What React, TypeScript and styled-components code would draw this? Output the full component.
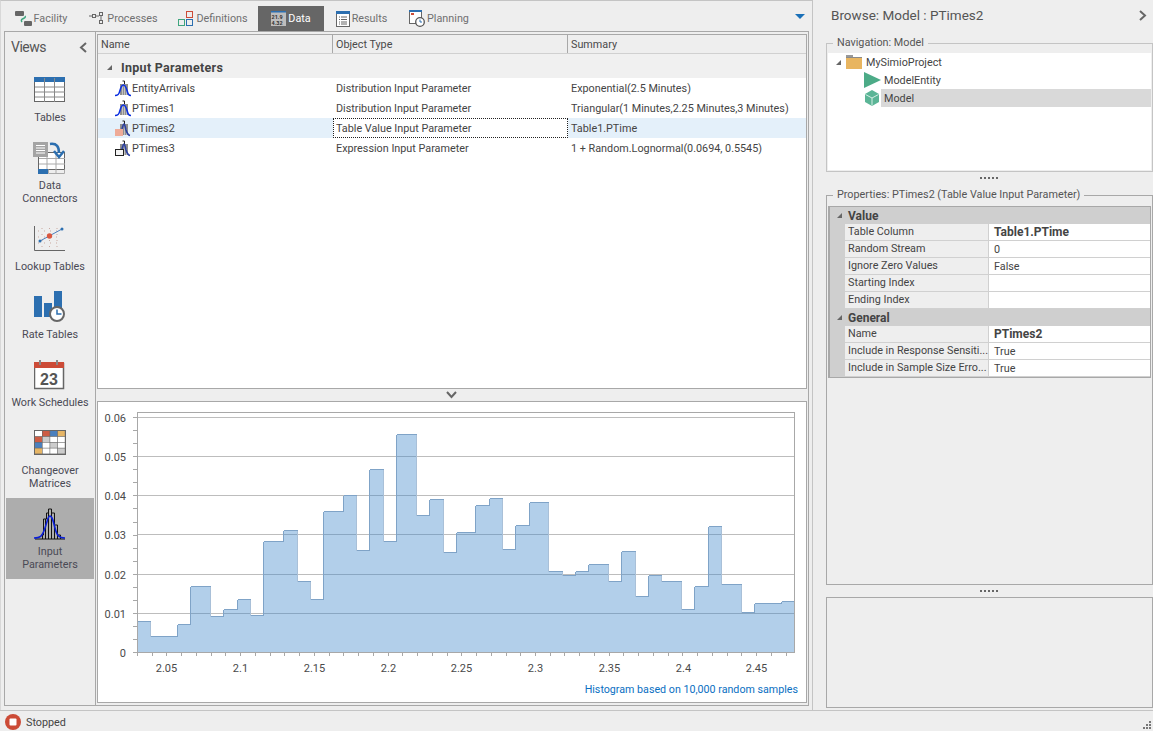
import * as React from "react";
import styled, { createGlobalStyle } from "styled-components";

const GlobalStyle = createGlobalStyle`
  html, body {
    margin: 0;
    padding: 0;
    background: #eeeeee;
  }
  body {
    font-family: Roboto, "Noto Sans", sans-serif;
    font-size: 10.8px;
    color: #444;
    overflow: hidden;
  }
  * {
    box-sizing: border-box;
  }
`;

const Shell = styled.div`
  display: flex;
  flex-direction: column;
  width: 1153px;
  height: 731px;
  background: #eeeeee;
`;

const Workspace = styled.div`
  display: flex;
  height: 711px;
  border-bottom: 1px solid #c4c4c4;
`;

const MainArea = styled.div`
  display: flex;
  flex-direction: column;
  width: 813px;
  border-top: 1px solid #c4c4c4;
  border-right: 1px solid #c4c4c4;
  border-left: 1px solid #d8d8d8;
`;

const TabBar = styled.div`
  display: flex;
  align-items: flex-end;
  height: 30px;
  padding-left: 2px;
  padding-right: 7px;
`;

const Tab = styled.div<{ $active?: boolean; $width: number }>`
  display: flex;
  align-items: center;
  justify-content: center;
  gap: 2px;
  width: ${p => p.$width}px;
  height: 25px;
  color: ${p => (p.$active ? "#ffffff" : "#707070")};
  background: ${p => (p.$active ? "#666666" : "transparent")};
`;

const TabMenu = styled.div`
  margin-left: auto;
  align-self: center;
  margin-top: 1px;
  width: 0;
  height: 0;
  border-left: 5px solid transparent;
  border-right: 5px solid transparent;
  border-top: 5px solid #1a70b8;
`;

const Frame = styled.div`
  display: flex;
  flex: 1;
  margin: 0 3px 4px 3px;
  border: 1px solid #a8a8a8;
  min-height: 0;
`;

const ViewsPanel = styled.div`
  display: flex;
  flex-direction: column;
  width: 91px;
  border-right: 1px solid #a8a8a8;
`;

const ViewsHeader = styled.div`
  display: flex;
  align-items: center;
  justify-content: space-between;
  height: 32px;
  padding: 0 5px 2px 6px;
  font-size: 14px;
  letter-spacing: -0.5px;
  color: #555;
`;

const ViewList = styled.div`
  display: flex;
  flex-direction: column;
  padding: 0 1px;
`;

const ViewItem = styled.div<{ $active?: boolean }>`
  display: flex;
  flex-direction: column;
  align-items: center;
  padding: 9px 0 8px;
  gap: 5px;
  text-align: center;
  line-height: 13px;
  color: #4a4a55;
  background: ${p => (p.$active ? "#adadad" : "transparent")};
`;

const ViewIconBox = styled.div`
  display: flex;
  align-items: center;
  justify-content: center;
  width: 34px;
  height: 33px;
`;

const ContentColumn = styled.div`
  display: flex;
  flex-direction: column;
  flex: 1;
  min-width: 0;
  padding: 2px 1px 2px 1px;
`;

const DataGrid = styled.div`
  display: flex;
  flex-direction: column;
  height: 356px;
  background: #ffffff;
  border: 1px solid #a8a8a8;
`;

const GridRow = styled.div`
  display: grid;
  grid-template-columns: 235px 235px 1fr;
`;

const HeaderRow = styled(GridRow)`
  height: 19px;
  background: #eeeeee;
  border-bottom: 1px solid #d0d0d0;
`;

const HeaderCell = styled.div`
  display: flex;
  align-items: center;
  padding-left: 3px;
  border-right: 1px solid #a8a8a8;
  color: #4a4a4a;
  &:last-child {
    border-right: 0;
  }
`;

const GroupRow = styled.div`
  display: flex;
  align-items: center;
  gap: 9px;
  height: 24px;
  padding: 2px 0 0 9px;
  background: #f0f0f0;
  font-size: 12.5px;
  letter-spacing: 0.3px;
  font-weight: 700;
  color: #444;
`;

const Triangle = styled.span`
  display: inline-block;
  width: 0;
  height: 0;
  border-left: 5px solid transparent;
  border-bottom: 5px solid #666;
`;

const DataRow = styled(GridRow)<{ $selected?: boolean }>`
  height: 20px;
  background: ${p => (p.$selected ? "#e4f0fa" : "#ffffff")};
`;

const NameCell = styled.div`
  display: flex;
  align-items: center;
  padding-left: 17px;
  gap: 1px;
  white-space: nowrap;
`;

const ValueCell = styled.div<{ $focused?: boolean }>`
  display: flex;
  align-items: center;
  padding-left: ${p => (p.$focused ? "2px" : "3px")};
  white-space: nowrap;
  background: ${p => (p.$focused ? "#ffffff" : "transparent")};
  border: ${p => (p.$focused ? "1px dotted #222" : "0")};
`;

const HSplitter = styled.div`
  display: flex;
  align-items: center;
  justify-content: center;
  height: 12px;
  padding-right: 2px;
`;

const ChartPanel = styled.div`
  height: 302px;
  background: #ffffff;
  border: 1px solid #a8a8a8;
`;

const RightPanel = styled.div`
  display: flex;
  flex-direction: column;
  flex: 1;
  min-width: 0;
  padding-left: 13px;
`;

const TitleBar = styled.div`
  display: flex;
  align-items: center;
  justify-content: space-between;
  height: 30px;
  padding: 0 4px 0 5px;
  font-size: 13.5px;
  color: #555;
`;

const GroupBox = styled.div<{ $height: number }>`
  position: relative;
  height: ${p => p.$height}px;
  margin-top: 13px;
  border: 1px solid #c4c4c4;
  padding: 9px 1px 1px;
`;

const GroupLegend = styled.div`
  position: absolute;
  top: -8px;
  left: 6px;
  padding: 0 4px;
  background: #eeeeee;
  color: #555;
  line-height: 14px;
`;

const NavTree = styled.div`
  height: 100%;
  background: #ffffff;
`;

const TreeRow = styled.div<{ $indent: number }>`
  display: flex;
  align-items: center;
  height: 18px;
  padding-left: ${p => p.$indent}px;
`;

const TreeLabel = styled.div<{ $selected?: boolean }>`
  display: flex;
  align-items: center;
  flex: 1;
  height: 18px;
  padding-left: 3px;
  background: ${p => (p.$selected ? "#d9d9d9" : "transparent")};
`;

const TreeFolderLabel = styled(TreeLabel)`
  padding-left: 4px;
`;

const TreeToggle = styled(Triangle)`
  margin-right: 5px;
`;

const DotRow = styled.div<{ $height: number; $after?: number }>`
  display: flex;
  align-items: center;
  justify-content: center;
  height: ${p => p.$height}px;
  margin-bottom: ${p => p.$after ?? 0}px;
`;

const PropertiesBox = styled(GroupBox)`
  margin-top: 0;
  padding: 0 1px;
  border-color: #a8a8a8;
`;

const PropGrid = styled.div`
  margin-top: 10px;
  border: 1px solid #a8a8a8;
  border-left-width: 2px;
  background: #cfcfcf;
  line-height: 16px;
`;

const PropCategory = styled.div`
  display: flex;
  align-items: center;
  gap: 6px;
  height: 17px;
  padding-left: 7px;
  font-size: 12px;
  font-weight: 700;
  color: #444;
`;

const PropRow = styled.div`
  display: grid;
  grid-template-columns: 144px 1fr;
  height: 17px;
  margin-left: 15px;
  background: #ffffff;
`;

const PropName = styled.div`
  padding: 0 0 0 3px;
  background: #eeeeee;
  border-right: 1px solid #d0d0d0;
  border-bottom: 1px solid #d0d0d0;
  white-space: nowrap;
  overflow: hidden;
  height: 17px;
  line-height: 15px;
`;

const PropValue = styled.div<{ $bold?: boolean }>`
  padding: 1px 0 0 5px;
  border-bottom: 1px solid #d0d0d0;
  font-size: ${p => (p.$bold ? "12px" : "inherit")};
  font-weight: ${p => (p.$bold ? 700 : 400)};
  height: 17px;
  line-height: 15px;
`;

const BottomBox = styled.div`
  height: 111px;
  border: 1px solid #a8a8a8;
`;

const StatusBar = styled.div`
  display: flex;
  align-items: center;
  gap: 5px;
  height: 20px;
  padding: 2px 2px 0 5px;
  color: #444;
`;

const StatusGrip = styled.div`
  display: flex;
  margin-left: auto;
  align-self: flex-end;
  margin-bottom: 2px;
`;

const DotsH = () => (
  <svg width="20" height="3">
    {[0, 4, 8, 12, 16].map(x => (
      <rect key={x} x={x} y="0" width="2" height="2" fill="#666" />
    ))}
  </svg>
);

const Chevron = ({ dir }: { dir: "left" | "right" | "down" }) => {
  const d = { left: "M7 1 2 5.5 7 10", right: "M2 1 7 5.5 2 10", down: "M1 2 5.5 7 10 2" }[dir];
  return (
    <svg width="11" height="11" fill="none" stroke="#666" strokeWidth="2">
      <path d={d} />
    </svg>
  );
};

/* tab icons */
const FacilityIcon = () => (
  <svg width="17" height="17">
    <rect x="0" y="1" width="9" height="5" rx="1" fill="#666" />
    <rect x="9" y="11" width="8" height="5" rx="1" fill="#666" />
    <path d="M10 6C12 9 4 8 7 12" fill="none" stroke="#3ea57e" strokeWidth="1.5" />
  </svg>
);

const ProcessesIcon = () => (
  <svg width="16" height="15" fill="none" stroke="#666">
    <rect x="3.5" y="3.5" width="3" height="3" />
    <rect x="10.5" y="1.5" width="3" height="3" />
    <rect x="10.5" y="9.5" width="3" height="3" />
    <path d="M0 5h3M7 5h3M12 5v4" />
  </svg>
);

const DefinitionsIcon = () => (
  <svg width="16" height="16" fill="none">
    <rect x="8.5" y="0.5" width="6" height="6" stroke="#cc4b37" />
    <rect x="0.5" y="8.5" width="6" height="6" stroke="#3ea57e" />
    <rect x="8.5" y="8.5" width="6" height="6" stroke="#2c6fb0" />
  </svg>
);

const DataIcon = () => (
  <svg width="15" height="15">
    <rect width="15" height="15" fill="#bdbdbd" />
    <rect width="15" height="1.500" fill="#2c6fb0" />
    <text x="0.5" y="7.5" fontSize="5.5" fontWeight="700" fill="#333">21.9</text>
    <text x="0.5" y="13.5" fontSize="5.5" fontWeight="700" fill="#333">4.32</text>
  </svg>
);

const ResultsIcon = () => (
  <svg width="14" height="16" fill="none">
    <rect x="0.5" y="0.5" width="13" height="15" fill="#fff" stroke="#666" />
    <rect x="0" y="0" width="14" height="3" fill="#2c6fb0" />
    <path d="M3 6h1M5 6h6M3 8.500h1M5 8.500h6M3 11h1M5 11h6M3 13h1M5 13h6" stroke="#666" />
  </svg>
);

const PlanningIcon = () => (
  <svg width="16" height="17" fill="none">
    <rect x="0.5" y="0.5" width="12" height="13" fill="#fff" stroke="#666" />
    <rect x="0" y="0" width="13" height="2" fill="#2c6fb0" />
    <rect x="2" y="3" width="3" height="2" fill="#cc4b37" />
    <circle cx="11" cy="12" r="4.300" fill="#fff" stroke="#555" strokeWidth="1.300" />
    <path d="M11 9.500V12h2" stroke="#2c6fb0" />
  </svg>
);

/* views icons */
const TablesIcon = () => (
  <svg width="32" height="26" fill="none">
    <rect x="0.5" y="0.5" width="30" height="24" fill="#fff" stroke="#666" />
    <rect x="0" y="0" width="31" height="5" fill="#2c6fb0" />
    <path d="M1 10h30M1 15h30M1 20h30" stroke="#888" />
    <path d="M10.500 1v24M20.500 1v24" stroke="#888" />
  </svg>
);

const ConnectorsIcon = () => (
  <svg width="34" height="32" fill="none">
    <rect x="5.500" y="10.500" width="26" height="17" fill="#fff" stroke="#666" />
    <path d="M6 16.500h26M6 22h26M14 11v17M23 11v17" stroke="#aaa" />
    <rect x="5" y="27" width="10" height="5" fill="#2c6fb0" />
    <path d="M15.500 27.500v4h16v-4M23 28v3" stroke="#aaa" />
    <rect x="0" y="0" width="15" height="15" fill="#a4a4a4" />
    <path d="M3 3.500h9M3 6h9M3 8.500h9M3 11h9" stroke="#fff" />
    <path d="M17 2c7-1 9 3 9 9" stroke="#2c6fb0" strokeWidth="2.500" />
    <path d="M21 9l5 6 5-6" stroke="#2c6fb0" strokeWidth="2.500" />
  </svg>
);

const LookupIcon = () => (
  <svg width="32" height="27" fill="none">
    <path d="M0.500 1v24.500H31" stroke="#666" />
    <path d="M4 6h24M4 12h24M4 18h24" stroke="#c9a9a0" strokeDasharray="1 5" />
    <path d="M15.500 3v22M8 3v22M23 3v22" stroke="#c9a9a0" strokeDasharray="1 5" />
    <path d="M6 16 28 4" stroke="#4b80bd" />
    <circle cx="6" cy="16" r="1.500" fill="#2c6fb0" />
    <circle cx="28" cy="4" r="1.500" fill="#2c6fb0" />
    <circle cx="15.500" cy="11" r="2.700" fill="#d9573f" />
  </svg>
);

const RateIcon = () => (
  <svg width="32" height="31">
    <rect x="0" y="5" width="8" height="21" fill="#2c6fb0" />
    <rect x="10" y="12" width="8" height="14" fill="#2c6fb0" />
    <rect x="20" y="0" width="8" height="20" fill="#2c6fb0" />
    <circle cx="23" cy="23" r="7" fill="#fff" stroke="#666" strokeWidth="2" />
    <path d="M23 18.500V23h4.500" fill="none" stroke="#2c6fb0" strokeWidth="1.500" />
  </svg>
);

const ScheduleIcon = () => (
  <svg width="32" height="30">
    <rect x="0.500" y="3.500" width="29" height="25" fill="#fff" stroke="#666" strokeWidth="1.500" />
    <rect x="0" y="2" width="30" height="6" fill="#cc4b37" />
    <rect x="5" y="0" width="2" height="5" fill="#888" />
    <rect x="22" y="0" width="2" height="5" fill="#888" />
    <text x="15" y="25" textAnchor="middle" fontSize="16" fontWeight="700" fill="#555" fontFamily="Liberation Sans">23</text>
  </svg>
);

const MATRIX = [
  ["#fff", "#cc5c44", "#4b80bd", "#e6b565"],
  ["#cc5c44", "#ccc", "#fff", "#fff"],
  ["#4b80bd", "#fff", "#ccc", "#fff"],
  ["#e6b565", "#fff", "#fff", "#ccc"]
];

const MatrixIcon = () => (
  <svg width="32" height="25">
    <rect width="32" height="25" fill="#666" />
    {MATRIX.map((row, r) =>
      row.map((c, i) => (
        <rect key={`${r}-${i}`} x={1 + i * 7.6} y={1 + r * 5.8} width="7" height="5.200" fill={c} />
      ))
    )}
  </svg>
);

const HistIcon = () => (
  <svg width="32" height="32" fill="none">
    <path d="M1 31h30" stroke="#111" />
    <path
      d="M8.500 31v-4h1v-16h3v-6h2v-4h3v4h3v12h3v10h3v4M11.500 31v-20M14.500 31v-26M17.500 31v-26M20.500 31v-16M23.500 31v-10"
      stroke="#111"
    />
    <path d="M0 30c6 0 8-1 11-10s3-12 5-12 3 4 5 12 4 10 10 10" stroke="#0b1fd8" strokeWidth="1.600" />
  </svg>
);

const RowIcon = ({ kind }: { kind: "dist" | "table" | "expr" }) => (
  <svg width="16" height="17" fill="none">
    <rect x="5" y="4" width="8" height="11" fill="#8f8f8f" />
    <path d="M7.500 15V6M9.500 15V6M11.500 15V9" stroke="#d8d8d8" strokeWidth="0.700" />
    <path d="M7.500 1h2v3" stroke="#222" />
    {kind === "dist" ? (
      <path d="M0 15.500c3 0 4-1 5-5S7 5 8.500 5s2.500 2 3.500 5.500 1.500 5 4 5" stroke="#0b2fe0" strokeWidth="1.600" />
    ) : (
      <path d="M7 9c1-3 1-5 2-5s1 3 2 6 2 5 4 5.500" stroke="#2b3fa0" strokeWidth="1.600" />
    )}
    {kind === "table" && <rect x="0" y="9" width="8" height="7" fill="#eeab98" />}
    {kind === "expr" && <rect x="0.500" y="9.500" width="8" height="6" fill="#f4f4f4" stroke="#222" />}
  </svg>
);

const FolderIcon = () => (
  <svg width="16" height="14">
    <rect x="0" y="0" width="7" height="2" fill="#999" />
    <rect x="0" y="3" width="16" height="11" fill="#e8b560" />
    <rect x="0" y="2" width="16" height="1" fill="#8a8a8a" />
  </svg>
);

const EntityIcon = () => (
  <svg width="17" height="16">
    <path d="M0 0v16L17 8z" fill="#4cab87" />
  </svg>
);

const CubeIcon = () => (
  <svg width="17" height="16">
    <path d="M8 0 15 4v8l-7 4-7-4V4z" fill="#5bb596" />
    <path d="M1.500 4.500 8 8l6.500-3.500M8 8v7.500" fill="none" stroke="#d6efe6" />
  </svg>
);

const StopIcon = () => (
  <svg width="16" height="16">
    <circle cx="8" cy="8" r="8" fill="#cc4b37" />
    <rect x="4.500" y="4.500" width="7" height="7" rx="1" fill="#fff" />
  </svg>
);

const GripIcon = () => (
  <svg width="9" height="9" fill="#777">
    <rect x="7" y="1" width="2" height="2" />
    <rect x="4" y="4" width="2" height="2" />
    <rect x="7" y="4" width="2" height="2" />
    <rect x="1" y="7" width="2" height="2" />
    <rect x="4" y="7" width="2" height="2" />
    <rect x="7" y="7" width="2" height="2" />
  </svg>
);

const Z6 = (z: number) => 96 + z / 3;
const Z7 = (z: number) => 450 + z / 3;
const ZY = (z: number) => 385 + z / 3;

// x edge (abs px) and top of each bin, read off the reference
const BINS: Array<[number, number]> = [
  ...([
    [124, 712], [163, 757], [244, 721], [283, 607], [343, 697], [382, 676], [424, 646], [463, 694],
    [502, 472], [562, 439], [602, 592], [643, 646], [682, 382], [742, 334], [781, 499], [820, 256],
    [862, 472], [901, 151], [961, 394], [1000, 346], [1040, 505]
  ] as Array<[number, number]>).map(([x, y]): [number, number] => [Z6(x), ZY(y)]),
  ...([
    [19, 445], [76, 364], [118, 343], [157, 496], [196, 424], [238, 355], [295, 562], [337, 574],
    [376, 562], [415, 541], [475, 592], [514, 502], [556, 637], [595, 574], [634, 592], [694, 676],
    [733, 607], [775, 427], [814, 601], [874, 685], [913, 658], [994, 652]
  ] as Array<[number, number]>).map(([x, y]): [number, number] => [Z7(x), ZY(y)])
];

const PLOT = { left: 137.5, right: 794.5, top: 413.5, bottom: 653.5 };
const Y_TICKS = ["0", "0.01", "0.02", "0.03", "0.04", "0.05", "0.06"];
const Y_POS = [653.5, 614.5, 575.5, 535.5, 496.5, 457.5, 418.5];
const X_TICKS = ["2.05", "2.1", "2.15", "2.2", "2.25", "2.3", "2.35", "2.4", "2.45"];
const X_POS = [166.5, 240.5, 314.5, 388.5, 461.5, 535.5, 609.5, 683.5, 756.5];

const AxisLabel = styled.text`
  font-size: 11px;
  fill: #4a4a4a;
`;

const ChartNote = styled.text`
  font-size: 10.7px;
  fill: #0a6fc2;
`;

const Histogram = () => {
  const edges = BINS.map(b => Math.round(b[0]) + 0.5);
  const tops = BINS.map(b => Math.round(b[1]) + 0.5);
  const last = BINS.length - 1;
  let fill = `M${PLOT.left} ${PLOT.bottom}`;
  let dark = "";
  let light = "";
  BINS.forEach((_, i) => {
    const x0 = i === 0 ? PLOT.left : edges[i];
    const x1 = i === last ? PLOT.right : edges[i + 1];
    fill += `L${x0} ${tops[i]}L${x1} ${tops[i]}`;
    dark += `M${x0} ${tops[i]}H${x1}`;
    if (i < last) {
      if (tops[i + 1] < tops[i]) {
        dark += `M${x1} ${tops[i]}V${tops[i + 1]}`;
      } else {
        light += `M${x1} ${tops[i]}V${tops[i + 1]}`;
      }
    }
  });
  fill += `L${PLOT.right} ${PLOT.bottom}Z`;
  const minorY: number[] = [];
  for (let y = 653.5; y > 414; y -= 13.05) minorY.push(Math.round(y - 0.5) + 0.5);
  const minorX: number[] = [];
  for (let x = 137.5; x < 795; x += 14.74) minorX.push(Math.round(x - 0.5) + 0.5);

  return (
    <svg width="708" height="300" viewBox="98 403 708 300" shapeRendering="crispEdges" fontFamily="inherit">
      <rect x={PLOT.left} y={PLOT.top} width={PLOT.right - PLOT.left} height={PLOT.bottom - PLOT.top} fill="#fff" />
      {Y_POS.map(y => (
        <path key={y} d={`M${PLOT.left} ${y}H${PLOT.right}`} stroke="#bdbdbd" />
      ))}
      <path d={fill} fill="rgb(62,135,202)" fillOpacity="0.4" />
      <path d={light} stroke="#a9c0d8" fill="none" />
      <path d={dark} stroke="#7fa3c7" fill="none" />
      <rect x={PLOT.left} y={PLOT.top} width={PLOT.right - PLOT.left} height={PLOT.bottom - PLOT.top} fill="none" stroke="#a8a8a8" />
      {minorY.map(y => (
        <path key={y} d={`M133 ${y}H${PLOT.left}`} stroke="#a8a8a8" />
      ))}
      {minorX.map(x => (
        <path key={x} d={`M${x} ${PLOT.bottom}v3`} stroke="#a8a8a8" />
      ))}
      <g shapeRendering="auto">
        {Y_TICKS.map((t, i) => (
          <AxisLabel key={t} x="126" y={Y_POS[i] + 4} textAnchor="end">
            {t}
          </AxisLabel>
        ))}
        {X_TICKS.map((t, i) => (
          <AxisLabel key={t} x={X_POS[i]} y="673" textAnchor="middle">
            {t}
          </AxisLabel>
        ))}
        <ChartNote x="798" y="694" textAnchor="end">
          Histogram based on 10,000 random samples
        </ChartNote>
      </g>
    </svg>
  );
};

const TABS = [
  { label: "Facility", width: 76, icon: <FacilityIcon /> },
  { label: "Processes", width: 89, icon: <ProcessesIcon /> },
  { label: "Definitions", width: 90, icon: <DefinitionsIcon /> },
  { label: "Data", width: 66, icon: <DataIcon />, active: true },
  { label: "Results", width: 75, icon: <ResultsIcon /> },
  { label: "Planning", width: 80, icon: <PlanningIcon /> }
];

const VIEWS = [
  { lines: ["Tables"], icon: <TablesIcon /> },
  { lines: ["Data", "Connectors"], icon: <ConnectorsIcon /> },
  { lines: ["Lookup Tables"], icon: <LookupIcon /> },
  { lines: ["Rate Tables"], icon: <RateIcon /> },
  { lines: ["Work Schedules"], icon: <ScheduleIcon /> },
  { lines: ["Changeover", "Matrices"], icon: <MatrixIcon /> },
  { lines: ["Input", "Parameters"], icon: <HistIcon />, active: true }
];

const PARAMS = [
  { name: "EntityArrivals", kind: "dist" as const, type: "Distribution Input Parameter", summary: "Exponential(2.5 Minutes)" },
  { name: "PTimes1", kind: "dist" as const, type: "Distribution Input Parameter", summary: "Triangular(1 Minutes,2.25 Minutes,3 Minutes)" },
  { name: "PTimes2", kind: "table" as const, type: "Table Value Input Parameter", summary: "Table1.PTime", selected: true },
  { name: "PTimes3", kind: "expr" as const, type: "Expression Input Parameter", summary: "1 + Random.Lognormal(0.0694, 0.5545)" }
];

const PROPERTIES = [
  {
    title: "Value",
    rows: [
      { name: "Table Column", value: "Table1.PTime", bold: true },
      { name: "Random Stream", value: "0" },
      { name: "Ignore Zero Values", value: "False" },
      { name: "Starting Index", value: "" },
      { name: "Ending Index", value: "" }
    ]
  },
  {
    title: "General",
    rows: [
      { name: "Name", value: "PTimes2", bold: true },
      { name: "Include in Response Sensiti...", value: "True" },
      { name: "Include in Sample Size Erro...", value: "True" }
    ]
  }
];

export default function App() {
  return (
    <Shell>
      <GlobalStyle />
      <Workspace>
        <MainArea>
          <TabBar>
            {TABS.map(tab => (
              <Tab key={tab.label} $active={tab.active} $width={tab.width}>
                {tab.icon}
                {tab.label}
              </Tab>
            ))}
            <TabMenu />
          </TabBar>
          <Frame>
            <ViewsPanel>
              <ViewsHeader>
                Views
                <Chevron dir="left" />
              </ViewsHeader>
              <ViewList>
                {VIEWS.map(view => (
                  <ViewItem key={view.lines[0]} $active={view.active}>
                    <ViewIconBox>{view.icon}</ViewIconBox>
                    <div>
                      {view.lines.map(line => (
                        <div key={line}>{line}</div>
                      ))}
                    </div>
                  </ViewItem>
                ))}
              </ViewList>
            </ViewsPanel>
            <ContentColumn>
              <DataGrid>
                <HeaderRow>
                  <HeaderCell>Name</HeaderCell>
                  <HeaderCell>Object Type</HeaderCell>
                  <HeaderCell>Summary</HeaderCell>
                </HeaderRow>
                <GroupRow>
                  <Triangle />
                  Input Parameters
                </GroupRow>
                {PARAMS.map(param => (
                  <DataRow key={param.name} $selected={param.selected}>
                    <NameCell>
                      <RowIcon kind={param.kind} />
                      {param.name}
                    </NameCell>
                    <ValueCell $focused={param.selected}>{param.type}</ValueCell>
                    <ValueCell>{param.summary}</ValueCell>
                  </DataRow>
                ))}
              </DataGrid>
              <HSplitter>
                <Chevron dir="down" />
              </HSplitter>
              <ChartPanel>
                <Histogram />
              </ChartPanel>
            </ContentColumn>
          </Frame>
        </MainArea>
        <RightPanel>
          <TitleBar>
            Browse: Model : PTimes2
            <Chevron dir="right" />
          </TitleBar>
          <GroupBox $height={129}>
            <GroupLegend>Navigation: Model</GroupLegend>
            <NavTree>
              <TreeRow $indent={8}>
                <TreeToggle />
                <FolderIcon />
                <TreeFolderLabel>MySimioProject</TreeFolderLabel>
              </TreeRow>
              <TreeRow $indent={36}>
                <EntityIcon />
                <TreeLabel>ModelEntity</TreeLabel>
              </TreeRow>
              <TreeRow $indent={36}>
                <CubeIcon />
                <TreeLabel $selected>Model</TreeLabel>
              </TreeRow>
            </NavTree>
          </GroupBox>
          <DotRow $height={13} $after={10}>
            <DotsH />
          </DotRow>
          <PropertiesBox $height={390}>
            <GroupLegend>Properties: PTimes2 (Table Value Input Parameter)</GroupLegend>
            <PropGrid>
              {PROPERTIES.map(group => (
                <div key={group.title}>
                  <PropCategory>
                    <Triangle />
                    {group.title}
                  </PropCategory>
                  {group.rows.map(row => (
                    <PropRow key={row.name}>
                      <PropName>{row.name}</PropName>
                      <PropValue $bold={row.bold}>{row.value}</PropValue>
                    </PropRow>
                  ))}
                </div>
              ))}
            </PropGrid>
          </PropertiesBox>
          <DotRow $height={12}>
            <DotsH />
          </DotRow>
          <BottomBox />
        </RightPanel>
      </Workspace>
      <StatusBar>
        <StopIcon />
        Stopped
        <StatusGrip>
          <GripIcon />
        </StatusGrip>
      </StatusBar>
    </Shell>
  );
}
